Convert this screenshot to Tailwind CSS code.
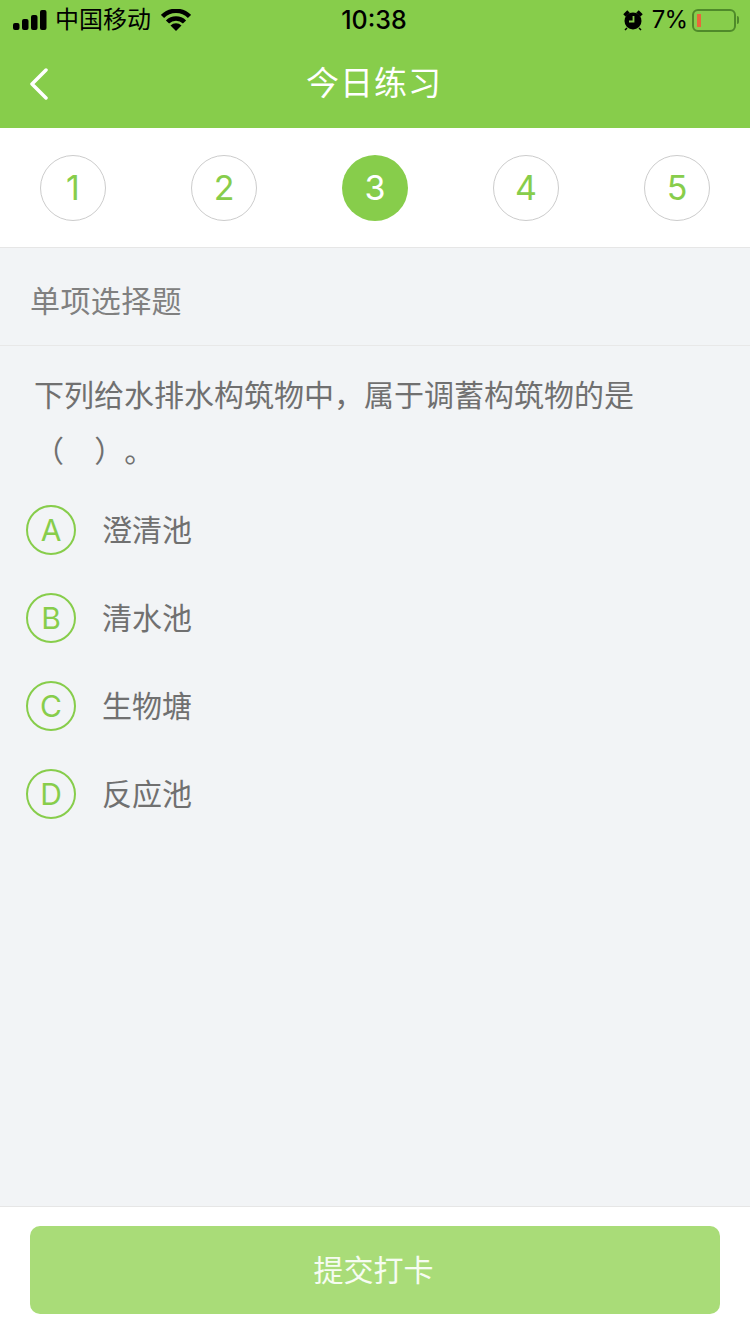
<!DOCTYPE html>
<html lang="zh">
<head>
    <meta charset="UTF-8">
    <meta name="viewport" content="width=device-width, initial-scale=1.0">
    <title>今日练习</title>
    <script src="https://cdn.jsdelivr.net/npm/@tailwindcss/browser@4"></script>
</head>
<body class="bg-[#f2f4f6] font-['Inter','Noto_Sans_CJK_SC',sans-serif]">
    <div class="w-[750px] h-[1334px] flex flex-col overflow-hidden">
        <!-- header -->
        <header class="h-[128px] shrink-0 bg-[#87cd4b] flex flex-col">
            <div class="h-[40px] grid grid-cols-3 items-center pl-[13px] pr-[11px] text-black">
                <div class="flex items-center">
                    <svg width="34" height="22" viewBox="0 0 34 22" fill="#000"><rect x="0" y="14" width="6.500" height="7" rx="2"/><rect x="9" y="10" width="6.500" height="11" rx="2"/><rect x="18" y="6" width="6.500" height="15" rx="2"/><rect x="27" y="1" width="6.500" height="20" rx="2"/></svg>
                    <span class="ml-[8px] text-[24px] leading-none">中国移动</span>
                    <svg class="ml-[10px]" width="30" height="22" viewBox="0 0 30 22" fill="none" stroke="#000" stroke-width="4.500"><path d="M1.500 7.500 A19 19 0 0 1 28.500 7.500"/><path d="M6.500 13 A12 12 0 0 1 23.500 13"/><path d="M15 22 L9.500 16.500 A8 8 0 0 1 20.500 16.500 Z" fill="#000" stroke="none"/></svg>
                </div>
                <div class="text-center text-[25px] font-medium leading-none -translate-x-[2px]">10:38</div>
                <div class="flex items-center justify-end">
                    <svg width="20" height="22" viewBox="0 0 20 22"><circle cx="10" cy="12" r="8.500" fill="#000"/><path d="M10.500 7v5.500H6" fill="none" stroke="#87cd4b" stroke-width="1.800"/><path d="M1.500 6.500l4-4M18.500 6.500l-4-4" stroke="#000" stroke-width="3.500"/><path d="M4 19l-2 2M16 19l2 2" stroke="#000" stroke-width="1.500"/></svg>
                    <span class="ml-[9px] text-[24px] tracking-[-1px] leading-none">7%</span>
                    <div class="ml-[5px] w-[44px] h-[23px] border-2 border-[#4f8a2a] rounded-[6px] flex items-center pl-[3px]">
                        <div class="w-[4px] h-[13px] bg-[#e8673a]"></div>
                    </div>
                    <div class="ml-[1px] w-[2px] h-[8px] bg-[#4f8a2a] rounded-r"></div>
                </div>
            </div>
            <div class="relative flex-1 flex items-center justify-center pb-[1px]">
                <svg class="absolute left-[29px] top-[28px]" width="20" height="32" viewBox="0 0 20 32" fill="none" stroke="#fff" stroke-width="3.500" stroke-linecap="round" stroke-linejoin="round"><path d="M17 2 L3 16 L17 30"/></svg>
                <h1 class="text-white text-[33px] tracking-[1px] leading-none -translate-x-[1px]">今日练习</h1>
            </div>
        </header>

        <!-- question numbers -->
        <nav class="h-[120px] shrink-0 bg-white border-b border-[#e6e6e6] flex items-center justify-between px-[40px] text-[34px] text-[#87cd4b]">
            <div class="w-[66px] h-[66px] rounded-full border border-[#cccccc] flex items-center justify-center">1</div>
            <div class="w-[66px] h-[66px] rounded-full border border-[#cccccc] flex items-center justify-center">2</div>
            <div class="w-[66px] h-[66px] rounded-full bg-[#87cd4b] text-white flex items-center justify-center">3</div>
            <div class="w-[66px] h-[66px] rounded-full border border-[#cccccc] flex items-center justify-center">4</div>
            <div class="w-[66px] h-[66px] rounded-full border border-[#cccccc] flex items-center justify-center">5</div>
        </nav>

        <!-- question -->
        <main class="flex-1">
            <div class="h-[98px] border-b border-[#e8e8e8] flex items-center pl-[30px] pt-[9px] text-[30px] tracking-[0.4px] text-[#808080]">单项选择题</div>
            <p class="pt-[21px] pl-[34px] text-[30px] leading-[56px] text-[#707070]">下列给水排水构筑物中，属于调蓄构筑物的是<br><span class="whitespace-pre">（   <span class="ml-[5px]">）</span><span class="ml-[15px]">。</span></span></p>
            <ul class="mt-[26px] pl-[26px] flex flex-col gap-[38px] text-[30px] text-[#707070]">
                <li class="flex items-center">
                    <span class="w-[50px] h-[50px] rounded-full border-2 border-[#87cd4b] flex items-center justify-center text-[#87cd4b]">A</span>
                    <span class="ml-[26px]">澄清池</span>
                </li>
                <li class="flex items-center">
                    <span class="w-[50px] h-[50px] rounded-full border-2 border-[#87cd4b] flex items-center justify-center text-[#87cd4b]">B</span>
                    <span class="ml-[26px]">清水池</span>
                </li>
                <li class="flex items-center">
                    <span class="w-[50px] h-[50px] rounded-full border-2 border-[#87cd4b] flex items-center justify-center text-[#87cd4b]">C</span>
                    <span class="ml-[26px]">生物塘</span>
                </li>
                <li class="flex items-center">
                    <span class="w-[50px] h-[50px] rounded-full border-2 border-[#87cd4b] flex items-center justify-center text-[#87cd4b]">D</span>
                    <span class="ml-[26px]">反应池</span>
                </li>
            </ul>
        </main>

        <!-- submit -->
        <footer class="h-[128px] shrink-0 bg-white border-t border-[#e6e6e6] pt-[19px] px-[30px]">
            <button class="w-full h-[88px] rounded-[10px] bg-[#a9dc78] text-white/90 text-[30px] pr-[3px]">提交打卡</button>
        </footer>
    </div>
</body>
</html>
